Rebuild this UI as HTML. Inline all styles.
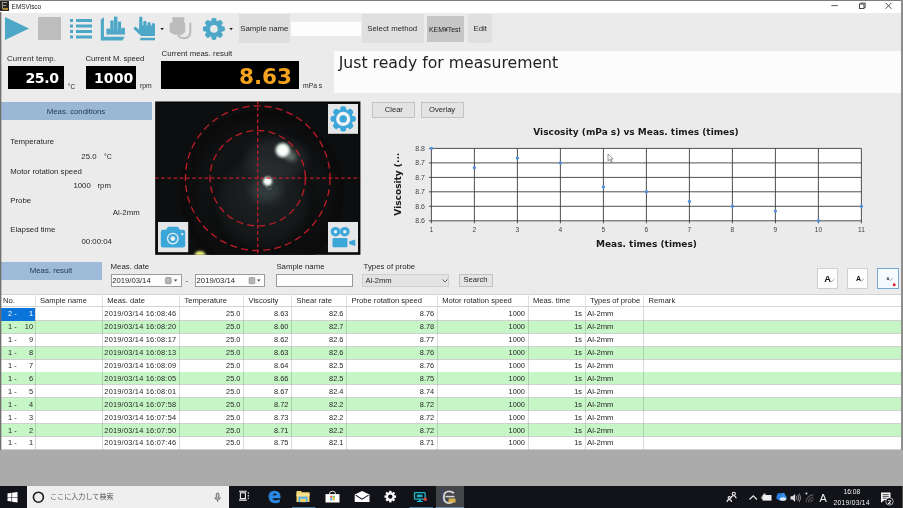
<!DOCTYPE html>
<html><head><meta charset="utf-8"><title>EMSVisco</title>
<style>
*{box-sizing:border-box;margin:0;padding:0}
html,body{width:903px;height:508px;overflow:hidden;background:#ebebeb}
body{position:relative;font-family:"Liberation Sans","Noto Sans CJK JP",sans-serif;font-size:7.5px;color:#262626;-webkit-font-smoothing:antialiased}
.a{position:absolute}
.t{position:absolute;white-space:nowrap;line-height:10px}
.dv{font-family:"DejaVu Sans","Liberation Sans",sans-serif}
.blk{position:absolute;background:#000}
.btn{position:absolute;background:#e1e1e1;border:1px solid #adadad;text-align:center;line-height:13px;font-size:7px}
#root{position:absolute;left:-6px;top:-6px;width:915px;height:520px;will-change:transform;filter:blur(0.4px)}
#inner{position:absolute;left:6px;top:6px;width:903px;height:508px}
</style></head><body><div id="root">
<div class="a" style="left:0;top:0;width:915px;height:7px;background:#7c7c7c"></div>
<div class="a" style="left:0;top:7px;width:7px;height:485px;background:#6e6e6e"></div>
<div class="a" style="left:908px;top:7px;width:7px;height:485px;background:#8e8e8e"></div>
<div class="a" style="left:0;top:491.8px;width:915px;height:28.2px;background:#121318"></div>
<div class="a" style="left:32.8px;top:500px;width:202.4px;height:20px;background:#efefef"></div>
<div id="inner">
<!-- title bar -->
<div class="a" id="titlebar" style="left:0;top:0;width:903px;height:12.5px;background:#fff"></div>
<div class="a" style="left:0;top:0;width:903px;height:1px;background:#7c7c7c"></div>
<div class="a" style="left:0;top:0.8px;width:8.6px;height:9.9px;background:#2c2824"></div><div class="a" style="left:2px;top:2px;width:5px;height:6.5px;border:1.4px solid #9a9488;border-right:none"></div><div class="a" style="left:2px;top:4.6px;width:4px;height:1.3px;background:#9a9488"></div><div class="a" style="left:3px;top:8px;width:5px;height:2px;background:#b08a30"></div>
<div class="t" style="left:11.6px;top:1.8px;font-size:6.45px;color:#222">EMSVisco</div>
<!-- toolbar -->
<div class="a" id="toolbar" style="left:0;top:12.5px;width:903px;height:35px;background:#ebebeb"></div>

<!-- toolbar icons -->
<svg class="a" style="left:0;top:12px" width="240" height="35" viewBox="0 12 240 35">
 <g fill="#4da7c7">
  <path d="M5 17 L29 28.5 L5 40 Z"/>
  <rect x="38" y="17" width="23" height="23" fill="#bdbdbd"/>
  <!-- list -->
  <g>
   <rect x="70" y="19" width="3" height="3"/><rect x="76" y="19" width="16" height="3"/>
   <rect x="70" y="24.5" width="3" height="3"/><rect x="76" y="24.5" width="16" height="3"/>
   <rect x="70" y="30" width="3" height="3"/><rect x="76" y="30" width="16" height="3"/>
   <rect x="70" y="35.5" width="3" height="3"/><rect x="76" y="35.5" width="16" height="3"/>
  </g>
  <!-- barchart icon -->
  <path d="M100.8 19.6 L103.9 17.2 V36.7 H124.8 L122.3 40.6 H100.8 Z"/>
  <rect x="106.6" y="28.6" width="3.4" height="5.8"/><rect x="110.3" y="20.5" width="3.4" height="13.9"/><rect x="114" y="16.6" width="3.4" height="17.8"/><rect x="117.7" y="21.6" width="3.4" height="12.8"/><rect x="121.4" y="27.8" width="3.4" height="6.6"/>
  <rect x="106.6" y="29.5" width="18.2" height="4.9" opacity="0.75"/>
  <!-- hand -->
  <rect x="139.2" y="16.5" width="3.2" height="14" rx="1.5"/><rect x="143.3" y="20.8" width="3.2" height="9" rx="1.5"/><rect x="147.5" y="21.9" width="3.2" height="9" rx="1.5"/><rect x="151.8" y="23" width="3.2" height="9" rx="1.5"/>
  <path d="M139.2 25.5 H155 V36 H141.2 L134.3 29.6 q-1.3-1.3-0.2-2.3 q1.1-1 2.4 0.1 L139.2 29.8 Z"/>
  <rect x="140.3" y="37.8" width="14.7" height="2.5"/>
  <!-- gear -->
  <g transform="translate(213.9 28.9)">
   <g id="teeth"><rect x="-2.6" y="-11" width="5.2" height="22" rx="1.8"/><rect x="-2.6" y="-11" width="5.2" height="22" rx="1.8" transform="rotate(45)"/><rect x="-2.6" y="-11" width="5.2" height="22" rx="1.8" transform="rotate(90)"/><rect x="-2.6" y="-11" width="5.2" height="22" rx="1.8" transform="rotate(135)"/></g>
   <circle r="8.4"/><circle r="3.8" fill="#ebebeb"/>
  </g>
 </g>
 <!-- plug (disabled) -->
 <g fill="#bcbcbc">
  <rect x="172.4" y="17.2" width="11.9" height="7"/><path d="M169.6 24 q0-1.4 1.4-1.4 h12.9 q1.4 0 1.4 1.4 V31 q0 1.2-1 1.8 L182 34.7 H174.5 L170.6 32.8 q-1-0.6-1-1.8 Z"/>
  <path d="M178.3 34 q0.3 4.2 5.6 4.2 q6.4 0 6.4-7 V22.8" fill="none" stroke="#bcbcbc" stroke-width="2.1"/>
 </g>
 <path d="M160.3 28 h3.6 l-1.8 2.2 Z" fill="#222"/>
 <path d="M229.3 28 h3.6 l-1.8 2.2 Z" fill="#222"/>
</svg>
<div class="a" style="left:239px;top:13.6px;width:51px;height:29.8px;background:#dedede"></div>
<div class="t" style="left:240.3px;top:23.8px;font-size:7.8px">Sample name</div>
<div class="a" style="left:291px;top:21.6px;width:70px;height:14.6px;background:#fdfdfd"></div>
<div class="a" style="left:362px;top:13.6px;width:62px;height:29.8px;background:#e0e0e0"></div>
<div class="t" style="left:367.3px;top:23.8px;font-size:7.8px">Select method</div>
<div class="a" style="left:427px;top:15.6px;width:37px;height:26.6px;background:#c6c6c6"></div>
<div class="t" style="left:429px;top:24.6px;font-size:6.9px;color:#222">KEM¥Test</div>
<div class="a" style="left:467.5px;top:13.6px;width:24.5px;height:29.8px;background:#e0e0e0"></div>
<div class="t" style="left:473.5px;top:23.8px;font-size:7.8px">Edit</div>
<!-- window controls -->
<svg class="a" style="left:750px;top:0" width="153" height="12" viewBox="750 0 153 12">
 <path d="M831.3 5.6 h6.4" stroke="#444" stroke-width="0.9"/>
 <rect x="859.5" y="4" width="4.5" height="4.5" fill="none" stroke="#333" stroke-width="0.9"/><path d="M860.8 4 v-1 h4.4 v4.5 h-1.2" fill="none" stroke="#333" stroke-width="0.8"/>
 <path d="M885.5 2.8 l6 6 M891.5 2.8 l-6 6" stroke="#333" stroke-width="0.9"/>
</svg>

<!-- status readouts -->
<div class="t" style="left:7px;top:54px;font-size:7.8px;letter-spacing:0.1px">Current temp.</div>
<div class="blk" style="left:8px;top:66.3px;width:55.5px;height:22.7px"></div>
<div class="t dv" style="left:7px;top:68.8px;width:51.5px;text-align:right;font-size:14.1px;letter-spacing:-0.45px;line-height:18px;font-weight:bold;color:#fff">25.0</div>
<div class="t" style="left:68px;top:81.5px;font-size:6.3px">°C</div>
<div class="t" style="left:85.6px;top:54px;font-size:7.8px;letter-spacing:-0.1px">Current M. speed</div>
<div class="blk" style="left:85.5px;top:66.3px;width:50.5px;height:22.7px"></div>
<div class="t dv" style="left:85px;top:68.8px;width:48.3px;text-align:right;font-size:14.1px;line-height:18px;font-weight:bold;color:#fff">1000</div>
<div class="t" style="left:140px;top:81px;font-size:6.8px">rpm</div>
<div class="t" style="left:161.5px;top:49px;font-size:7.8px">Current meas. result</div>
<div class="blk" style="left:161px;top:61px;width:138px;height:28px"></div>
<div class="t dv" style="left:161px;top:64px;width:131px;text-align:right;font-size:21.5px;line-height:26px;font-weight:bold;color:#f5a21f">8.63</div>
<div class="t" style="left:303px;top:81px;font-size:6.8px">mPa s</div>
<!-- meas conditions -->
<div class="a" style="left:0;top:101.8px;width:151.5px;height:18.2px;background:#9bb7d6"></div>
<div class="t" style="left:0;top:106.5px;width:152px;text-align:center;font-size:7.8px;color:#223a55">Meas. conditions</div>
<div class="t" style="left:10.3px;top:137px;font-size:7.8px">Temperature</div>
<div class="t" style="left:81.3px;top:152px;font-size:7.8px">25.0</div><div class="t" style="left:104px;top:152px;font-size:7px">°C</div>
<div class="t" style="left:10.3px;top:166.7px;font-size:7.8px">Motor rotation speed</div>
<div class="t" style="left:73.4px;top:181px;font-size:7.8px">1000</div><div class="t" style="left:97.5px;top:181px;font-size:7.8px">rpm</div>
<div class="t" style="left:10.3px;top:196px;font-size:7.8px">Probe</div>
<div class="t" style="left:112.8px;top:207.8px;font-size:7.8px">Al-2mm</div>
<div class="t" style="left:10.3px;top:225px;font-size:7.8px">Elapsed time</div>
<div class="t" style="left:81.5px;top:237.2px;font-size:7.8px">00:00:04</div>

<!-- camera -->
<svg class="a" style="left:155px;top:101px" width="207" height="155" viewBox="155 101 207 155">
 <defs>
  <radialGradient id="g1" cx="0.5" cy="0.5" r="0.5"><stop offset="0" stop-color="#1f2325"/><stop offset="0.5" stop-color="#16191a"/><stop offset="0.8" stop-color="#0e0f10"/><stop offset="1" stop-color="#0a0a0b"/></radialGradient>
  <radialGradient id="b1" cx="0.5" cy="0.5" r="0.5"><stop offset="0" stop-color="#fff"/><stop offset="0.6" stop-color="#f6fff9"/><stop offset="0.82" stop-color="#a9c0b2" stop-opacity="0.75"/><stop offset="1" stop-color="#445" stop-opacity="0"/></radialGradient>
  <filter id="bl" x="-50%" y="-50%" width="200%" height="200%"><feGaussianBlur stdDeviation="0.9"/></filter>
  <filter id="bl3" x="-50%" y="-50%" width="200%" height="200%"><feGaussianBlur stdDeviation="4"/></filter>
  <filter id="bl2" x="-50%" y="-50%" width="200%" height="200%"><feGaussianBlur stdDeviation="2"/></filter>
  <clipPath id="cc"><rect x="155.2" y="101.5" width="205.2" height="153.3"/></clipPath>
 </defs>
 <rect x="155.2" y="101.5" width="205.2" height="153.3" fill="#020202"/>
 <g clip-path="url(#cc)">
  <rect x="156.2" y="102.5" width="203.2" height="151.3" fill="#0d0e0f"/>
  <circle cx="262" cy="192" r="82" fill="url(#g1)"/>
  <circle cx="263" cy="203" r="50" fill="none" stroke="#000" stroke-width="6" opacity="0.5" filter="url(#bl3)"/>
  <ellipse cx="276" cy="160" rx="30" ry="20" fill="#3c4346" opacity="0.4" filter="url(#bl3)"/>
  <ellipse cx="266" cy="190" rx="16" ry="12" fill="#4a5a5c" opacity="0.45" filter="url(#bl3)"/>
  <ellipse cx="289" cy="155" rx="8" ry="5" transform="rotate(35 289 155)" fill="#9fb0a6" opacity="0.55" filter="url(#bl2)"/>
  <circle cx="282.7" cy="150.2" r="8.6" fill="url(#b1)" filter="url(#bl)"/>
  <circle cx="267.6" cy="181.3" r="5.6" fill="url(#b1)" filter="url(#bl)"/>
  <path d="M266 187 q2 4 6 1" fill="none" stroke="#8a9a9a" stroke-width="0.8" opacity="0.6"/>
  <ellipse cx="200" cy="254.3" rx="5.2" ry="3.2" fill="#e6ee78" filter="url(#bl)"/>
  <g stroke="#cf1f2b" stroke-width="1.3" fill="none" opacity="0.92">
   <path d="M155 178.2 H362" stroke-dasharray="3.6 2.6"/><path d="M257.7 101 V256" stroke-dasharray="3.6 2.6"/>
   <circle cx="257.7" cy="178.2" r="72.3" stroke-dasharray="7 4.2"/>
   <circle cx="257.7" cy="178.2" r="47.7" stroke-dasharray="7 4.2"/>
  </g>
 </g>
 <!-- buttons -->
 <g>
  <rect x="328" y="104" width="30" height="29.8" fill="#e5e6e7"/>
  <g transform="translate(343.2 118.9)" fill="#3ca6d8">
   <rect x="-2.9" y="-12.6" width="5.8" height="25.2" rx="2"/><rect x="-2.9" y="-12.6" width="5.8" height="25.2" rx="2" transform="rotate(45)"/><rect x="-2.9" y="-12.6" width="5.8" height="25.2" rx="2" transform="rotate(90)"/><rect x="-2.9" y="-12.6" width="5.8" height="25.2" rx="2" transform="rotate(135)"/>
   <circle r="9.8"/><circle r="7.1" fill="#eef3f6"/><circle r="3.7"/>
  </g>
  <rect x="158" y="222" width="30.2" height="30.2" fill="#e5e6e7"/>
  <g fill="#3ca6d8">
   <rect x="160.8" y="229.7" width="24.4" height="17.7" rx="2.2"/><path d="M165.6 230.5 l2.4-3.7 h10 l2.4 3.7 Z"/>
   <circle cx="172.8" cy="238.6" r="5.9" fill="#e9f1f5"/><circle cx="172.8" cy="238.6" r="4.6"/><circle cx="172.8" cy="238.6" r="2.3" fill="#e9f1f5"/>
   <circle cx="182.3" cy="234.2" r="1.1" fill="#e9f1f5"/>
  </g>
  <rect x="328" y="222" width="30" height="30.2" fill="#e5e6e7"/>
  <g fill="#3ca6d8">
   <circle cx="335.5" cy="231.7" r="4.8"/><circle cx="344.8" cy="231.7" r="4.8"/>
   <circle cx="335.5" cy="231.7" r="1.7" fill="#eef3f6"/><circle cx="344.8" cy="231.7" r="1.7" fill="#eef3f6"/>
   <rect x="332.5" y="238.1" width="14.9" height="9.2" rx="0.8"/>
   <path d="M349 242.6 q0-1.2 1.2-1.6 l5.1-1.6 v6.6 l-5.1-1.6 q-1.2-0.4-1.2-1.8 Z"/>
  </g>
 </g>
</svg>
<!-- chart -->
<div class="btn" style="left:372.2px;top:102px;width:43.3px;height:15.5px;line-height:13.6px;font-size:7.6px;background:#e3e3e3;border-color:#c4c4c4">Clear</div>
<div class="btn" style="left:420.5px;top:102px;width:43.2px;height:15.5px;line-height:13.6px;font-size:7.6px;background:#e3e3e3;border-color:#c4c4c4">Overlay</div>
<svg class="a" style="left:380px;top:120px" width="520" height="135" viewBox="380 120 520 135" font-family="'Liberation Sans',sans-serif">
<rect x="431.4" y="148.4" width="430.0" height="72.4" fill="#fff"/>
<g stroke="#3c3c3c" stroke-width="0.9">
<path d="M431.4 148.4 V223.3"/>
<path d="M474.4 148.4 V223.3"/>
<path d="M517.4 148.4 V223.3"/>
<path d="M560.4 148.4 V223.3"/>
<path d="M603.4 148.4 V223.3"/>
<path d="M646.4 148.4 V223.3"/>
<path d="M689.4 148.4 V223.3"/>
<path d="M732.4 148.4 V223.3"/>
<path d="M775.4 148.4 V223.3"/>
<path d="M818.4 148.4 V223.3"/>
<path d="M861.4 148.4 V223.3"/>
<path d="M428.9 148.4 H861.4"/>
<path d="M428.9 162.9 H861.4"/>
<path d="M428.9 177.4 H861.4"/>
<path d="M428.9 191.8 H861.4"/>
<path d="M428.9 206.3 H861.4"/>
<path d="M428.9 220.8 H861.4"/>
</g>
<g fill="#5590d8">
<circle cx="431.4" cy="148.4" r="1.7"/>
<circle cx="474.4" cy="167.7" r="1.7"/>
<circle cx="517.4" cy="158.1" r="1.7"/>
<circle cx="560.4" cy="162.9" r="1.7"/>
<circle cx="603.4" cy="187.0" r="1.7"/>
<circle cx="646.4" cy="191.8" r="1.7"/>
<circle cx="689.4" cy="201.5" r="1.7"/>
<circle cx="732.4" cy="206.3" r="1.7"/>
<circle cx="775.4" cy="211.1" r="1.7"/>
<circle cx="818.4" cy="220.8" r="1.7"/>
<circle cx="861.4" cy="206.3" r="1.7"/>
</g>
<g font-size="7" fill="#444" text-anchor="end">
<text x="425" y="150.8">8.8</text>
<text x="425" y="165.3">8.7</text>
<text x="425" y="179.8">8.7</text>
<text x="425" y="194.2">8.7</text>
<text x="425" y="208.7">8.6</text>
<text x="425" y="223.2">8.6</text>
</g>
<g font-size="6.6" fill="#444" text-anchor="middle">
<text x="431.4" y="232">1</text>
<text x="474.4" y="232">2</text>
<text x="517.4" y="232">3</text>
<text x="560.4" y="232">4</text>
<text x="603.4" y="232">5</text>
<text x="646.4" y="232">6</text>
<text x="689.4" y="232">7</text>
<text x="732.4" y="232">8</text>
<text x="775.4" y="232">9</text>
<text x="818.4" y="232">10</text>
<text x="861.4" y="232">11</text>
</g>
<text x="636" y="135.1" text-anchor="middle" font-family="'DejaVu Sans',sans-serif" font-size="9" font-weight="bold" fill="#1a1a1a">Viscosity (mPa s) vs Meas. times (times)</text>
<text x="646.5" y="246.5" text-anchor="middle" font-family="'DejaVu Sans',sans-serif" font-size="9" font-weight="bold" fill="#1a1a1a">Meas. times (times)</text>
<text transform="translate(401 184.2) rotate(-90)" text-anchor="middle" font-family="'DejaVu Sans',sans-serif" font-size="9" font-weight="bold" fill="#1a1a1a">Viscosity (···</text>
<path d="M608 154 v7 l1.8-1.6 l1.3 2.8 l1-0.5 l-1.3-2.7 h2.3 Z" fill="#fff" stroke="#555" stroke-width="0.6"/>
</svg>
<!-- filter row -->
<div class="a" style="left:0;top:262px;width:102px;height:18px;background:#9ebad9"></div>
<div class="t" style="left:0;top:266px;width:102px;text-align:center;font-size:7.8px;color:#223a55">Meas. result</div>
<div class="t" style="left:110.6px;top:262.3px;font-size:7.8px">Meas. date</div>
<div class="a" style="left:110.6px;top:274.3px;width:71px;height:12.8px;background:#fdfdfd;border:1px solid #9c9c9c"></div>
<div class="t" style="left:112.2px;top:275.8px;font-size:7.7px">2019/03/14</div>
<div class="t" style="left:185.5px;top:275.8px;font-size:7.7px">-</div>
<div class="a" style="left:195px;top:274.3px;width:69.5px;height:12.8px;background:#fdfdfd;border:1px solid #9c9c9c"></div>
<div class="t" style="left:196.6px;top:275.8px;font-size:7.7px">2019/03/14</div>
<svg class="a" style="left:160px;top:274px" width="110" height="13" viewBox="160 274 110 13"><g fill="#b4b4b4" stroke="#888" stroke-width="0.6"><rect x="165.4" y="277.5" width="5.8" height="6.2" rx="1"/><rect x="249" y="277.5" width="5.8" height="6.2" rx="1"/></g><path d="M173.8 279.6 h3.6 l-1.8 2Z M256.9 279.6 h3.6 l-1.8 2Z" fill="#444"/></svg>
<div class="t" style="left:276.4px;top:262.3px;font-size:7.8px">Sample name</div>
<div class="a" style="left:275.8px;top:274.3px;width:77px;height:12.8px;background:#fdfdfd;border:1px solid #9a9a9a"></div>
<div class="t" style="left:363.6px;top:262.3px;font-size:7.8px">Types of probe</div>
<div class="a" style="left:362.2px;top:274.3px;width:87px;height:12.8px;background:#e3e3e3;border:1px solid #cfcfcf"></div>
<div class="t" style="left:365.5px;top:275.8px;font-size:7.6px">Al-2mm</div>
<svg class="a" style="left:439.5px;top:277px" width="10" height="8" viewBox="0 0 10 8"><path d="M2.5 2.5 L5 5 L7.5 2.5" fill="none" stroke="#444" stroke-width="0.8"/></svg>
<div class="btn" style="left:458.5px;top:274.3px;width:34px;height:12.8px;line-height:10.8px;font-size:7.6px;background:#e4e4e4;border-color:#c4c4c4">Search</div>
<div class="a" style="left:816.7px;top:268px;width:21.2px;height:20.5px;background:#fdfdfd;border:1px solid #cfcfcf"></div>
<div class="t" style="left:824.2px;top:272.6px;font-size:9.4px;line-height:12px;font-weight:bold;color:#111">A</div>
<div class="a" style="left:847.2px;top:268px;width:21.2px;height:20.5px;background:#fdfdfd;border:1px solid #cfcfcf"></div>
<div class="t" style="left:856px;top:273.8px;font-size:7px;line-height:10px;font-weight:bold;color:#111">A</div>
<div class="a" style="left:877px;top:267.8px;width:21.6px;height:21px;background:#f4fafe;border:1px solid #7aa7d0"></div>
<div class="t" style="left:886.6px;top:274.7px;font-size:4px;line-height:8px;font-weight:bold;color:#333">A</div>
<svg class="a" style="left:816px;top:267px" width="85" height="23" viewBox="816 267 85 23"><g stroke="#666" stroke-width="0.6" fill="none"><path d="M830.6 281.2 l1.2 0.3 l2.6-2.4"/><path d="M860.6 280.8 l1 0.3 l2.3-2.2"/><path d="M889.6 280.2 l0.8 0.2 l2.2-2"/></g><circle cx="894.2" cy="284.7" r="1.5" fill="#d8202f"/></svg>
<!-- table -->

<div class="a" id="tbl" style="left:0;top:293px;width:901px;height:157px;overflow:hidden;background:#fff;font-size:7.4px;color:#262626">
<div class="a" style="left:0;top:0;width:901px;height:1px;background:#ebebeb"></div><div class="a" style="left:0;top:1px;width:901px;height:1px;background:#d4d4d4"></div>
<div class="a" style="left:0;top:13px;width:901px;height:1px;background:#d4d4d4"></div>
<div class="t" style="left:3.0px;top:3px;font-size:7.6px">No.</div>
<div class="t" style="left:40.0px;top:3px;font-size:7.6px">Sample name</div>
<div class="a" style="left:34.5px;top:1px;width:1px;height:12px;background:#e2e2e2"></div>
<div class="t" style="left:107.3px;top:3px;font-size:7.6px">Meas. date</div>
<div class="a" style="left:101.8px;top:1px;width:1px;height:12px;background:#e2e2e2"></div>
<div class="t" style="left:184.4px;top:3px;font-size:7.6px">Temperature</div>
<div class="a" style="left:178.9px;top:1px;width:1px;height:12px;background:#e2e2e2"></div>
<div class="t" style="left:248.5px;top:3px;font-size:7.6px">Viscosity</div>
<div class="a" style="left:243.0px;top:1px;width:1px;height:12px;background:#e2e2e2"></div>
<div class="t" style="left:296.4px;top:3px;font-size:7.6px">Shear rate</div>
<div class="a" style="left:290.9px;top:1px;width:1px;height:12px;background:#e2e2e2"></div>
<div class="t" style="left:351.5px;top:3px;font-size:7.6px">Probe rotation speed</div>
<div class="a" style="left:346.0px;top:1px;width:1px;height:12px;background:#e2e2e2"></div>
<div class="t" style="left:442.2px;top:3px;font-size:7.6px">Motor rotation speed</div>
<div class="a" style="left:436.7px;top:1px;width:1px;height:12px;background:#e2e2e2"></div>
<div class="t" style="left:533.0px;top:3px;font-size:7.6px">Meas. time</div>
<div class="a" style="left:527.5px;top:1px;width:1px;height:12px;background:#e2e2e2"></div>
<div class="t" style="left:590.0px;top:3px;font-size:7.6px">Types of probe</div>
<div class="a" style="left:584.5px;top:1px;width:1px;height:12px;background:#e2e2e2"></div>
<div class="t" style="left:648.6px;top:3px;font-size:7.6px">Remark</div>
<div class="a" style="left:643.1px;top:1px;width:1px;height:12px;background:#e2e2e2"></div>
<div class="a" style="left:0;top:14.80px;width:901px;height:13.03px;background:#fff;border-bottom:1px solid #d0d0d0">
<div class="a" style="left:0;top:0;width:35px;height:12.93px;background:#0a74da"></div>
<div class="t" style="color:#fff;left:8px;top:1.4px">2 -</div><div class="t" style="color:#fff;left:10px;width:23px;text-align:right;top:1.4px">1</div>
<div class="t" style="letter-spacing:0.22px;left:104.3px;top:1.4px">2019/03/14 16:08:46</div>
<div class="t" style="left:179.4px;width:61.1px;text-align:right;top:1.4px">25.0</div><div class="t" style="left:243.5px;width:44.9px;text-align:right;top:1.4px">8.63</div><div class="t" style="left:291.4px;width:52.1px;text-align:right;top:1.4px">82.6</div><div class="t" style="left:346.5px;width:87.7px;text-align:right;top:1.4px">8.76</div><div class="t" style="left:437.2px;width:87.8px;text-align:right;top:1.4px">1000</div><div class="t" style="left:528.0px;width:54.0px;text-align:right;top:1.4px">1s</div>
<div class="t" style="font-size:7.7px;left:587.0px;top:1.4px">Al-2mm</div>
</div>
<div class="a" style="left:0;top:27.73px;width:901px;height:13.03px;background:#c6f6c6;border-bottom:1px solid #d0d0d0">
<div class="t" style="left:8px;top:1.4px">1 -</div><div class="t" style="left:10px;width:23px;text-align:right;top:1.4px">10</div>
<div class="t" style="letter-spacing:0.22px;left:104.3px;top:1.4px">2019/03/14 16:08:20</div>
<div class="t" style="left:179.4px;width:61.1px;text-align:right;top:1.4px">25.0</div><div class="t" style="left:243.5px;width:44.9px;text-align:right;top:1.4px">8.60</div><div class="t" style="left:291.4px;width:52.1px;text-align:right;top:1.4px">82.7</div><div class="t" style="left:346.5px;width:87.7px;text-align:right;top:1.4px">8.78</div><div class="t" style="left:437.2px;width:87.8px;text-align:right;top:1.4px">1000</div><div class="t" style="left:528.0px;width:54.0px;text-align:right;top:1.4px">1s</div>
<div class="t" style="font-size:7.7px;left:587.0px;top:1.4px">Al-2mm</div>
</div>
<div class="a" style="left:0;top:40.66px;width:901px;height:13.03px;background:#fff;border-bottom:1px solid #d0d0d0">
<div class="t" style="left:8px;top:1.4px">1 -</div><div class="t" style="left:10px;width:23px;text-align:right;top:1.4px">9</div>
<div class="t" style="letter-spacing:0.22px;left:104.3px;top:1.4px">2019/03/14 16:08:17</div>
<div class="t" style="left:179.4px;width:61.1px;text-align:right;top:1.4px">25.0</div><div class="t" style="left:243.5px;width:44.9px;text-align:right;top:1.4px">8.62</div><div class="t" style="left:291.4px;width:52.1px;text-align:right;top:1.4px">82.6</div><div class="t" style="left:346.5px;width:87.7px;text-align:right;top:1.4px">8.77</div><div class="t" style="left:437.2px;width:87.8px;text-align:right;top:1.4px">1000</div><div class="t" style="left:528.0px;width:54.0px;text-align:right;top:1.4px">1s</div>
<div class="t" style="font-size:7.7px;left:587.0px;top:1.4px">Al-2mm</div>
</div>
<div class="a" style="left:0;top:53.59px;width:901px;height:13.03px;background:#c6f6c6;border-bottom:1px solid #d0d0d0">
<div class="t" style="left:8px;top:1.4px">1 -</div><div class="t" style="left:10px;width:23px;text-align:right;top:1.4px">8</div>
<div class="t" style="letter-spacing:0.22px;left:104.3px;top:1.4px">2019/03/14 16:08:13</div>
<div class="t" style="left:179.4px;width:61.1px;text-align:right;top:1.4px">25.0</div><div class="t" style="left:243.5px;width:44.9px;text-align:right;top:1.4px">8.63</div><div class="t" style="left:291.4px;width:52.1px;text-align:right;top:1.4px">82.6</div><div class="t" style="left:346.5px;width:87.7px;text-align:right;top:1.4px">8.76</div><div class="t" style="left:437.2px;width:87.8px;text-align:right;top:1.4px">1000</div><div class="t" style="left:528.0px;width:54.0px;text-align:right;top:1.4px">1s</div>
<div class="t" style="font-size:7.7px;left:587.0px;top:1.4px">Al-2mm</div>
</div>
<div class="a" style="left:0;top:66.52px;width:901px;height:13.03px;background:#fff;border-bottom:1px solid #d0d0d0">
<div class="t" style="left:8px;top:1.4px">1 -</div><div class="t" style="left:10px;width:23px;text-align:right;top:1.4px">7</div>
<div class="t" style="letter-spacing:0.22px;left:104.3px;top:1.4px">2019/03/14 16:08:09</div>
<div class="t" style="left:179.4px;width:61.1px;text-align:right;top:1.4px">25.0</div><div class="t" style="left:243.5px;width:44.9px;text-align:right;top:1.4px">8.64</div><div class="t" style="left:291.4px;width:52.1px;text-align:right;top:1.4px">82.5</div><div class="t" style="left:346.5px;width:87.7px;text-align:right;top:1.4px">8.76</div><div class="t" style="left:437.2px;width:87.8px;text-align:right;top:1.4px">1000</div><div class="t" style="left:528.0px;width:54.0px;text-align:right;top:1.4px">1s</div>
<div class="t" style="font-size:7.7px;left:587.0px;top:1.4px">Al-2mm</div>
</div>
<div class="a" style="left:0;top:79.45px;width:901px;height:13.03px;background:#c6f6c6;border-bottom:1px solid #d0d0d0">
<div class="t" style="left:8px;top:1.4px">1 -</div><div class="t" style="left:10px;width:23px;text-align:right;top:1.4px">6</div>
<div class="t" style="letter-spacing:0.22px;left:104.3px;top:1.4px">2019/03/14 16:08:05</div>
<div class="t" style="left:179.4px;width:61.1px;text-align:right;top:1.4px">25.0</div><div class="t" style="left:243.5px;width:44.9px;text-align:right;top:1.4px">8.66</div><div class="t" style="left:291.4px;width:52.1px;text-align:right;top:1.4px">82.5</div><div class="t" style="left:346.5px;width:87.7px;text-align:right;top:1.4px">8.75</div><div class="t" style="left:437.2px;width:87.8px;text-align:right;top:1.4px">1000</div><div class="t" style="left:528.0px;width:54.0px;text-align:right;top:1.4px">1s</div>
<div class="t" style="font-size:7.7px;left:587.0px;top:1.4px">Al-2mm</div>
</div>
<div class="a" style="left:0;top:92.38px;width:901px;height:13.03px;background:#fff;border-bottom:1px solid #d0d0d0">
<div class="t" style="left:8px;top:1.4px">1 -</div><div class="t" style="left:10px;width:23px;text-align:right;top:1.4px">5</div>
<div class="t" style="letter-spacing:0.22px;left:104.3px;top:1.4px">2019/03/14 16:08:01</div>
<div class="t" style="left:179.4px;width:61.1px;text-align:right;top:1.4px">25.0</div><div class="t" style="left:243.5px;width:44.9px;text-align:right;top:1.4px">8.67</div><div class="t" style="left:291.4px;width:52.1px;text-align:right;top:1.4px">82.4</div><div class="t" style="left:346.5px;width:87.7px;text-align:right;top:1.4px">8.74</div><div class="t" style="left:437.2px;width:87.8px;text-align:right;top:1.4px">1000</div><div class="t" style="left:528.0px;width:54.0px;text-align:right;top:1.4px">1s</div>
<div class="t" style="font-size:7.7px;left:587.0px;top:1.4px">Al-2mm</div>
</div>
<div class="a" style="left:0;top:105.31px;width:901px;height:13.03px;background:#c6f6c6;border-bottom:1px solid #d0d0d0">
<div class="t" style="left:8px;top:1.4px">1 -</div><div class="t" style="left:10px;width:23px;text-align:right;top:1.4px">4</div>
<div class="t" style="letter-spacing:0.22px;left:104.3px;top:1.4px">2019/03/14 16:07:58</div>
<div class="t" style="left:179.4px;width:61.1px;text-align:right;top:1.4px">25.0</div><div class="t" style="left:243.5px;width:44.9px;text-align:right;top:1.4px">8.72</div><div class="t" style="left:291.4px;width:52.1px;text-align:right;top:1.4px">82.2</div><div class="t" style="left:346.5px;width:87.7px;text-align:right;top:1.4px">8.72</div><div class="t" style="left:437.2px;width:87.8px;text-align:right;top:1.4px">1000</div><div class="t" style="left:528.0px;width:54.0px;text-align:right;top:1.4px">1s</div>
<div class="t" style="font-size:7.7px;left:587.0px;top:1.4px">Al-2mm</div>
</div>
<div class="a" style="left:0;top:118.24px;width:901px;height:13.03px;background:#fff;border-bottom:1px solid #d0d0d0">
<div class="t" style="left:8px;top:1.4px">1 -</div><div class="t" style="left:10px;width:23px;text-align:right;top:1.4px">3</div>
<div class="t" style="letter-spacing:0.22px;left:104.3px;top:1.4px">2019/03/14 16:07:54</div>
<div class="t" style="left:179.4px;width:61.1px;text-align:right;top:1.4px">25.0</div><div class="t" style="left:243.5px;width:44.9px;text-align:right;top:1.4px">8.73</div><div class="t" style="left:291.4px;width:52.1px;text-align:right;top:1.4px">82.2</div><div class="t" style="left:346.5px;width:87.7px;text-align:right;top:1.4px">8.72</div><div class="t" style="left:437.2px;width:87.8px;text-align:right;top:1.4px">1000</div><div class="t" style="left:528.0px;width:54.0px;text-align:right;top:1.4px">1s</div>
<div class="t" style="font-size:7.7px;left:587.0px;top:1.4px">Al-2mm</div>
</div>
<div class="a" style="left:0;top:131.17px;width:901px;height:13.03px;background:#c6f6c6;border-bottom:1px solid #d0d0d0">
<div class="t" style="left:8px;top:1.4px">1 -</div><div class="t" style="left:10px;width:23px;text-align:right;top:1.4px">2</div>
<div class="t" style="letter-spacing:0.22px;left:104.3px;top:1.4px">2019/03/14 16:07:50</div>
<div class="t" style="left:179.4px;width:61.1px;text-align:right;top:1.4px">25.0</div><div class="t" style="left:243.5px;width:44.9px;text-align:right;top:1.4px">8.71</div><div class="t" style="left:291.4px;width:52.1px;text-align:right;top:1.4px">82.2</div><div class="t" style="left:346.5px;width:87.7px;text-align:right;top:1.4px">8.72</div><div class="t" style="left:437.2px;width:87.8px;text-align:right;top:1.4px">1000</div><div class="t" style="left:528.0px;width:54.0px;text-align:right;top:1.4px">1s</div>
<div class="t" style="font-size:7.7px;left:587.0px;top:1.4px">Al-2mm</div>
</div>
<div class="a" style="left:0;top:144.10px;width:901px;height:13.03px;background:#fff;border-bottom:1px solid #d0d0d0">
<div class="t" style="left:8px;top:1.4px">1 -</div><div class="t" style="left:10px;width:23px;text-align:right;top:1.4px">1</div>
<div class="t" style="letter-spacing:0.22px;left:104.3px;top:1.4px">2019/03/14 16:07:46</div>
<div class="t" style="left:179.4px;width:61.1px;text-align:right;top:1.4px">25.0</div><div class="t" style="left:243.5px;width:44.9px;text-align:right;top:1.4px">8.75</div><div class="t" style="left:291.4px;width:52.1px;text-align:right;top:1.4px">82.1</div><div class="t" style="left:346.5px;width:87.7px;text-align:right;top:1.4px">8.71</div><div class="t" style="left:437.2px;width:87.8px;text-align:right;top:1.4px">1000</div><div class="t" style="left:528.0px;width:54.0px;text-align:right;top:1.4px">1s</div>
<div class="t" style="font-size:7.7px;left:587.0px;top:1.4px">Al-2mm</div>
</div>
<div class="a" style="left:34.5px;top:14px;width:1px;height:143px;background:rgba(120,120,120,0.28)"></div>
<div class="a" style="left:101.8px;top:14px;width:1px;height:143px;background:rgba(120,120,120,0.28)"></div>
<div class="a" style="left:178.9px;top:14px;width:1px;height:143px;background:rgba(120,120,120,0.28)"></div>
<div class="a" style="left:243.0px;top:14px;width:1px;height:143px;background:rgba(120,120,120,0.28)"></div>
<div class="a" style="left:290.9px;top:14px;width:1px;height:143px;background:rgba(120,120,120,0.28)"></div>
<div class="a" style="left:346.0px;top:14px;width:1px;height:143px;background:rgba(120,120,120,0.28)"></div>
<div class="a" style="left:436.7px;top:14px;width:1px;height:143px;background:rgba(120,120,120,0.28)"></div>
<div class="a" style="left:527.5px;top:14px;width:1px;height:143px;background:rgba(120,120,120,0.28)"></div>
<div class="a" style="left:584.5px;top:14px;width:1px;height:143px;background:rgba(120,120,120,0.28)"></div>
<div class="a" style="left:643.1px;top:14px;width:1px;height:143px;background:rgba(120,120,120,0.28)"></div>
</div>
<!-- status strip -->
<div class="a" id="msg" style="left:334.4px;top:51px;width:567px;height:41.5px;background:#fcfcfc"></div>
<div class="t dv" style="left:338.7px;top:52.8px;font-size:15.7px;line-height:20px;color:#222">Just ready for measurement</div>
<div class="a" style="left:901.3px;top:0;width:1.7px;height:486px;background:#8e8e8e"></div>
<div class="a" style="left:0;top:12px;width:1px;height:476px;background:#6e6e6e"></div><div class="a" style="left:1px;top:12px;width:1px;height:476px;background:rgba(120,120,120,0.35)"></div>
<!-- taskbar -->
<div class="a" id="grayfill" style="left:0;top:449.8px;width:903px;height:38px;background:#ababab"></div>
<div class="a" id="taskbar" style="left:0;top:485.8px;width:903px;height:22.2px;background:#121318"></div>

<div class="a" style="left:26.8px;top:485.8px;width:202.4px;height:22.2px;background:#efefef"></div>
<div class="t" style="left:50px;top:492.3px;font-size:7.1px;line-height:11px;color:#555;font-family:'Liberation Sans','Noto Sans CJK JP',sans-serif">ここに入力して検索</div>
<div class="a" style="left:435.5px;top:485.8px;width:28.6px;height:22.2px;background:#444549"></div>
<svg class="a" style="left:0;top:487px" width="903" height="21" viewBox="0 487 903 21">
 <!-- windows logo -->
 <g fill="#fff"><path d="M7.5 493.4 l4-0.55 v4.1 h-4Z M12.1 492.75 l5.4-0.75 v4.95 h-5.4Z M7.5 497.5 h4 v4.1 l-4-0.55Z M12.1 497.5 h5.4 v4.95 l-5.4-0.75Z"/></g>
 <circle cx="38.4" cy="497.2" r="5" fill="none" stroke="#1c1c1c" stroke-width="1.6"/>
 <!-- mic -->
 <g stroke="#555" fill="none" stroke-width="0.8"><rect x="216.3" y="493" width="2.6" height="5.5" rx="1.3" fill="#ccc"/><path d="M215 497 q0 3 2.6 3 q2.6 0 2.6-3 M217.6 500 v2"/></g>
 <g transform="translate(0 -1.2)">
 <!-- task view -->
 <g stroke="#f2f2f2" fill="none" stroke-width="1.1"><rect x="240.4" y="494" width="5" height="5.8"/><path d="M239 492.4 h7.8 M239 501.3 h7.8"/><path d="M248.3 493.5 v7" stroke-dasharray="1.4 1.3"/></g>
 <!-- edge -->
 <path d="M268.5 498 q0.5-5.8 6.2-5.8 q5.6 0 5.6 6 v1 h-8 q0.3 2.6 3.4 2.6 q2 0 3.8-1 v2.4 q-1.8 0.9-4.4 0.9 q-5.8 0-6.1-5.6 q1.2-3.3 4.5-3.6 q-3.4 0-5 3.1Z M272.4 496.7 h4.6 q-0.1-2.2-2.2-2.2 q-2 0-2.4 2.2Z" fill="#2b8be6" stroke="#2b8be6" stroke-width="0.5"/>
 <!-- folder -->
 <g><path d="M296.5 492.3 h4.5 l1 1.2 h7.5 v9.8 h-13Z" fill="#f4d36b"/><rect x="296.5" y="494.6" width="13" height="3" fill="#f7e08e"/><rect x="298.5" y="497.8" width="9" height="5.5" fill="#59b4e8"/><rect x="300.3" y="500" width="5.4" height="3.3" fill="#f4d36b"/></g>
 <!-- store -->
 <g><path d="M325.5 495.3 h14 v8.4 h-14Z" fill="#fff"/><path d="M329.7 495.3 v-1.2 q0-1.6 2.8-1.6 q2.8 0 2.8 1.6 v1.2" fill="none" stroke="#fff" stroke-width="0.9"/><rect x="330.3" y="497" width="2" height="2" fill="#e74c3c"/><rect x="332.8" y="497" width="2" height="2" fill="#7cbb3f"/><rect x="330.3" y="499.5" width="2" height="2" fill="#2d9de6"/><rect x="332.8" y="499.5" width="2" height="2" fill="#f3b722"/></g>
 <!-- mail -->
 <g><path d="M354.7 495.6 l7.4-3.4 l7.4 3.4 v7.6 h-14.8Z" fill="#fff"/><path d="M355.6 496.3 l6.5 4 l6.5-4" fill="none" stroke="#121318" stroke-width="1.1"/></g>
 <!-- settings -->
 <g transform="translate(390.3 497.8)" fill="#fff"><rect x="-1.2" y="-5.8" width="2.4" height="11.6"/><rect x="-1.2" y="-5.8" width="2.4" height="11.6" transform="rotate(45)"/><rect x="-1.2" y="-5.8" width="2.4" height="11.6" transform="rotate(90)"/><rect x="-1.2" y="-5.8" width="2.4" height="11.6" transform="rotate(135)"/><circle r="4.3"/><circle r="2.2" fill="#121318"/></g>
 <!-- teal monitor -->
 <g transform="translate(0 1.2)"><rect x="414.5" y="492.6" width="10.6" height="6.6" rx="0.8" fill="none" stroke="#1eb5c9" stroke-width="1.3"/><rect x="416.8" y="494.6" width="5.6" height="2.6" fill="#1eb5c9"/><rect x="418.6" y="499.6" width="2.4" height="1.6" fill="#1eb5c9"/><rect x="416.8" y="501" width="6" height="1" fill="#1eb5c9"/><circle cx="425.2" cy="499.2" r="1.7" fill="#e0453a"/></g>
 <!-- active app icon -->
 <g transform="translate(0 1.2)"><path d="M454 493.2 q-2.2-1.8-4.8-1.8 q-5.4 0-5.4 5.8 q0 5.8 5.4 5.8 q2.2 0 4-1.2" fill="none" stroke="#d4d4d4" stroke-width="1.9"/><path d="M445.5 496.6 h9" stroke="#d4d4d4" stroke-width="1.6"/><rect x="448.6" y="498.4" width="7" height="4.2" rx="0.6" fill="#d9b04a"/><path d="M442.3 489.5 v14" stroke="#3f55e0" stroke-width="0.9" stroke-dasharray="1.2 1.6"/></g>
 </g>
 <!-- underlines -->
 <rect x="292" y="507" width="23.5" height="1" fill="#76b9ed" opacity="0.6"/>
 <rect x="409.5" y="507" width="23.5" height="1" fill="#76b9ed" opacity="0.6"/>
 <rect x="435.5" y="507.2" width="28.6" height="0.8" fill="#8ec4f0" opacity="0.7"/>
 <!-- tray -->
 <g stroke="#eee" fill="none" stroke-width="1.1">
  <circle cx="733.8" cy="493.8" r="1.6"/><path d="M730.8 498.3 q0.4-2.6 2.7-2.6 q2.3 0 2.7 2.6"/><circle cx="729.3" cy="497.8" r="1.2"/><path d="M727 502 q0.2-2.4 2.3-2.4 q2.1 0 2.3 2.4"/>
  <path d="M749.5 499.5 l3.7-3.7 l3.7 3.7"/>
 </g>
 <g fill="#f0f0f0"><rect x="762.5" y="495" width="9" height="5.6"/><rect x="761.5" y="496.5" width="1.2" height="2.4"/><rect x="763.5" y="493.6" width="2" height="1.6"/></g>
 <g><ellipse cx="781.5" cy="497.5" rx="5.2" ry="3.2" fill="#2a7de0"/><circle cx="779.5" cy="495.6" r="2.6" fill="#2a7de0"/><circle cx="783" cy="495" r="2.2" fill="#3b8cee"/><ellipse cx="783" cy="499" rx="3.4" ry="1.8" fill="#dfeaf8"/></g>
 <g fill="#ddd"><path d="M790.5 496.3 h2 l2.6-2.4 v8 l-2.6-2.4 h-2Z"/></g>
 <g stroke="#bbb" fill="none" stroke-width="0.7"><path d="M796.3 495.8 q1.3 2 0 4 M797.8 494.6 q2.1 3.2 0 6.4 M799.3 493.6 q2.8 4.2 0 8.4"/></g>
 <g fill="none" stroke="#5a5a5a" stroke-width="1.1"><path d="M810.8 502.3 a2.6 2.6 0 0 1 2.6-2.6"/><path d="M808.4 502.3 a5 5 0 0 1 5-5"/><path d="M806 502.3 a7.4 7.4 0 0 1 7.4-7.4"/></g><rect x="805.6" y="492.6" width="1.7" height="1.7" fill="#eee"/>
</svg>
<div class="t" style="left:819.6px;top:491.2px;font-size:11px;line-height:14px;color:#f2f2f2">A</div>
<div class="t" style="left:834.3px;top:486.8px;width:35px;text-align:center;font-size:6.7px;line-height:9px;color:#f2f2f2">16:08</div>
<div class="t" style="left:830.2px;top:497.9px;width:43px;text-align:center;letter-spacing:0.3px;font-size:6.7px;line-height:9px;color:#f2f2f2">2019/03/14</div>
<svg class="a" style="left:878px;top:489px" width="18" height="18" viewBox="878 489 18 18"><path d="M881 492.5 h9.5 v7.6 h-6 l-3.5 2.6Z" fill="#f4f4f4"/><path d="M882.6 494.6 h6.2 M882.6 496.4 h6.2 M882.6 498.2 h4" stroke="#121318" stroke-width="0.7"/><circle cx="889.5" cy="501.4" r="3.7" fill="#121318" stroke="#cfcfcf" stroke-width="0.8"/></svg>
<div class="t" style="left:887.7px;top:497.9px;font-size:6.2px;font-weight:bold;line-height:7px;color:#fff">2</div><div class="a" style="left:901.5px;top:486px;width:1px;height:22px;background:#555"></div>
</div></div></body></html>
